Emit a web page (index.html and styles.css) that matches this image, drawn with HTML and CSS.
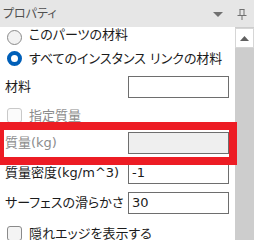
FILE: index.html
```html
<!DOCTYPE html>
<html lang="ja">
<head>
<meta charset="utf-8">
<link rel="stylesheet" href="styles.css">
</head>
<body>
<div class="panel">
  <div class="header">
    <span class="title">プロパティ</span>
    <span class="tools">
      <svg class="drop" width="10" height="5" viewBox="0 0 10 5"><path d="M0 0H10L5 5Z" fill="#707070"/></svg>
      <svg class="pin" width="10" height="11" viewBox="0 0 10 11"><path d="M2.5 0.5H7.5M3 0.5V6M7 0.5V6M0.5 6.5H9.5M5 6.5V11" stroke="#707070" stroke-width="1" fill="none"/></svg>
    </span>
  </div>
  <div class="body">
    <div class="content">
      <div class="radio-row first">
        <span class="radio"></span><span class="text raised">このパーツの材料</span>
      </div>
      <div class="radio-row second">
        <span class="radio checked"></span><span class="text">すべてのインスタンス リンクの材料</span>
      </div>
      <div class="field-row r-material">
        <span class="label">材料</span><span class="input"></span>
      </div>
      <div class="check-row r-spec">
        <span class="check disabled"></span><span class="text muted">指定質量</span>
      </div>
      <div class="field-row r-mass">
        <span class="label muted">質量(kg)</span><span class="input disabled"></span>
      </div>
      <div class="field-row r-density">
        <span class="label">質量密度(kg/m^3)</span><span class="input">-1</span>
      </div>
      <div class="field-row r-smooth">
        <span class="label">サーフェスの滑らかさ</span><span class="input">30</span>
      </div>
      <div class="check-row r-hidden">
        <span class="check"></span><span class="text">隠れエッジを表示する</span>
      </div>
    </div>
    <div class="scrollbar">
      <div class="sb-up">
        <svg width="9" height="5" viewBox="0 0 9 5"><path d="M0 5H9L4.5 0Z" fill="#606060"/></svg>
      </div>
    </div>
  </div>
  <div class="annot"></div>
</div>
</body>
</html>
```
FILE: styles.css
```css
* { box-sizing: border-box; }
html, body { margin: 0; padding: 0; background: #ffffff; }
body {
  font-family: "DejaVu Sans", "Noto Sans CJK JP", sans-serif;
  font-feature-settings: "palt";
  color: #1b1b1b;
}
.panel {
  position: relative;
  width: 254px;
  height: 240px;
  overflow: hidden;
  background: #ffffff;
}
.header {
  height: 27px;
  background: #e6e6e6;
  display: flex;
  align-items: center;
  justify-content: space-between;
  padding: 0 0 0 3px;
}
.title {
  font-size: 12px;
  line-height: 14px;
  color: #505050;
}
.tools {
  display: flex;
  align-items: center;
  gap: 14px;
  padding-right: 7px;
}
.drop { margin-top: 2px; }
.pin { margin-top: 1px; }
.body {
  display: flex;
  height: 213px;
}
.content {
  flex: 1;
  overflow: hidden;
  padding-top: 3px;
  font-size: 13px;
}
.scrollbar {
  width: 19px;
  background: #cdcdcd;
  padding-top: 1px;
}
.sb-up {
  height: 20px;
  background: #ffffff;
  border: 1px solid #d6d6d6;
  display: flex;
  align-items: center;
  justify-content: center;
}
.radio-row, .check-row {
  display: flex;
  align-items: center;
  gap: 7px;
  padding-left: 7px;
  height: 15px;
  line-height: 15px;
  white-space: nowrap;
}
.raised { margin-top: -7px; }
.second { margin-top: 6px; }
.radio {
  width: 15px;
  height: 15px;
  border-radius: 50%;
  border: 1px solid #8a8a8a;
  background: #f2f2f2;
  flex: none;
}
.radio.checked {
  border: 4.5px solid #005fb8;
  background: #ffffff;
}
.check {
  width: 15px;
  height: 15px;
  border-radius: 3px;
  border: 1px solid #8a8a8a;
  background: #f4f4f4;
  flex: none;
}
.check.disabled {
  border-color: #c9c9c9;
  background: #fbfbfb;
}
.muted { color: #8c8c8c; }
.field-row {
  display: flex;
  align-items: center;
  height: 22px;
  white-space: nowrap;
}
.label {
  width: 128px;
  padding-left: 5px;
  line-height: 16px;
}
.input {
  width: 101px;
  height: 22px;
  border: 1px solid #6e6e6e;
  background: #ffffff;
  padding-left: 3px;
  line-height: 20px;
  font-size: 13px;
}
.input.disabled { background: #efefef; }
.r-material { margin-top: 10px; }
.r-spec { margin-top: 10px; }
.r-mass { margin-top: 9px; }
.r-density { margin-top: 8px; }
.r-smooth { margin-top: 8px; }
.r-hidden { margin-top: 12px; }
.annot {
  position: absolute;
  left: -4px;
  top: 122px;
  width: 241px;
  height: 43px;
  border: 8px solid #ed1c24;
}
```
